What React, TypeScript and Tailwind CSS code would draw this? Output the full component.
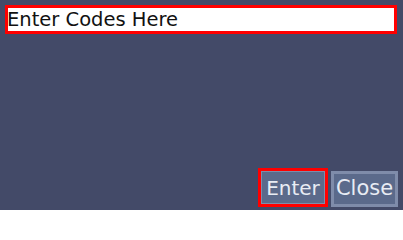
export default function App() {
  return (
    <div
      className="flex h-[210px] w-[403px] flex-col bg-[#434a68] pb-[3px] pl-[5px] pr-[5px] pt-[5px]"
      style={{ fontFamily: '"DejaVu Sans", "Liberation Sans", sans-serif' }}
    >
      {/* Code input */}
      <div className="h-[29px] w-[392px] border-[3px] border-[#ff0000] bg-white">
        <input
          type="text"
          placeholder="Enter Codes Here"
          className="-ml-[1px] h-full w-full bg-transparent px-0 text-[19.5px] leading-[23px] text-[#111] placeholder:text-[#111] outline-none"
        />
      </div>

      <div className="flex-1" />

      {/* Actions */}
      <div className="flex items-end justify-end gap-[3px]">
        <button
          type="button"
          className="flex h-[39px] w-[70px] border-[3px] border-[#ff0000] bg-[#5b6a8b]"
        >
          <span className="flex h-full w-full items-center justify-center border border-[#7f8caa] text-[20px] text-[#e8ecf4]">
            Enter
          </span>
        </button>
        <button
          type="button"
          className="flex h-[36px] w-[67px] items-center justify-center border-[3px] border-[#7f8caa] bg-[#5b6a8b] text-[21px] text-[#e8ecf4]"
        >
          Close
        </button>
      </div>
    </div>
  )
}
